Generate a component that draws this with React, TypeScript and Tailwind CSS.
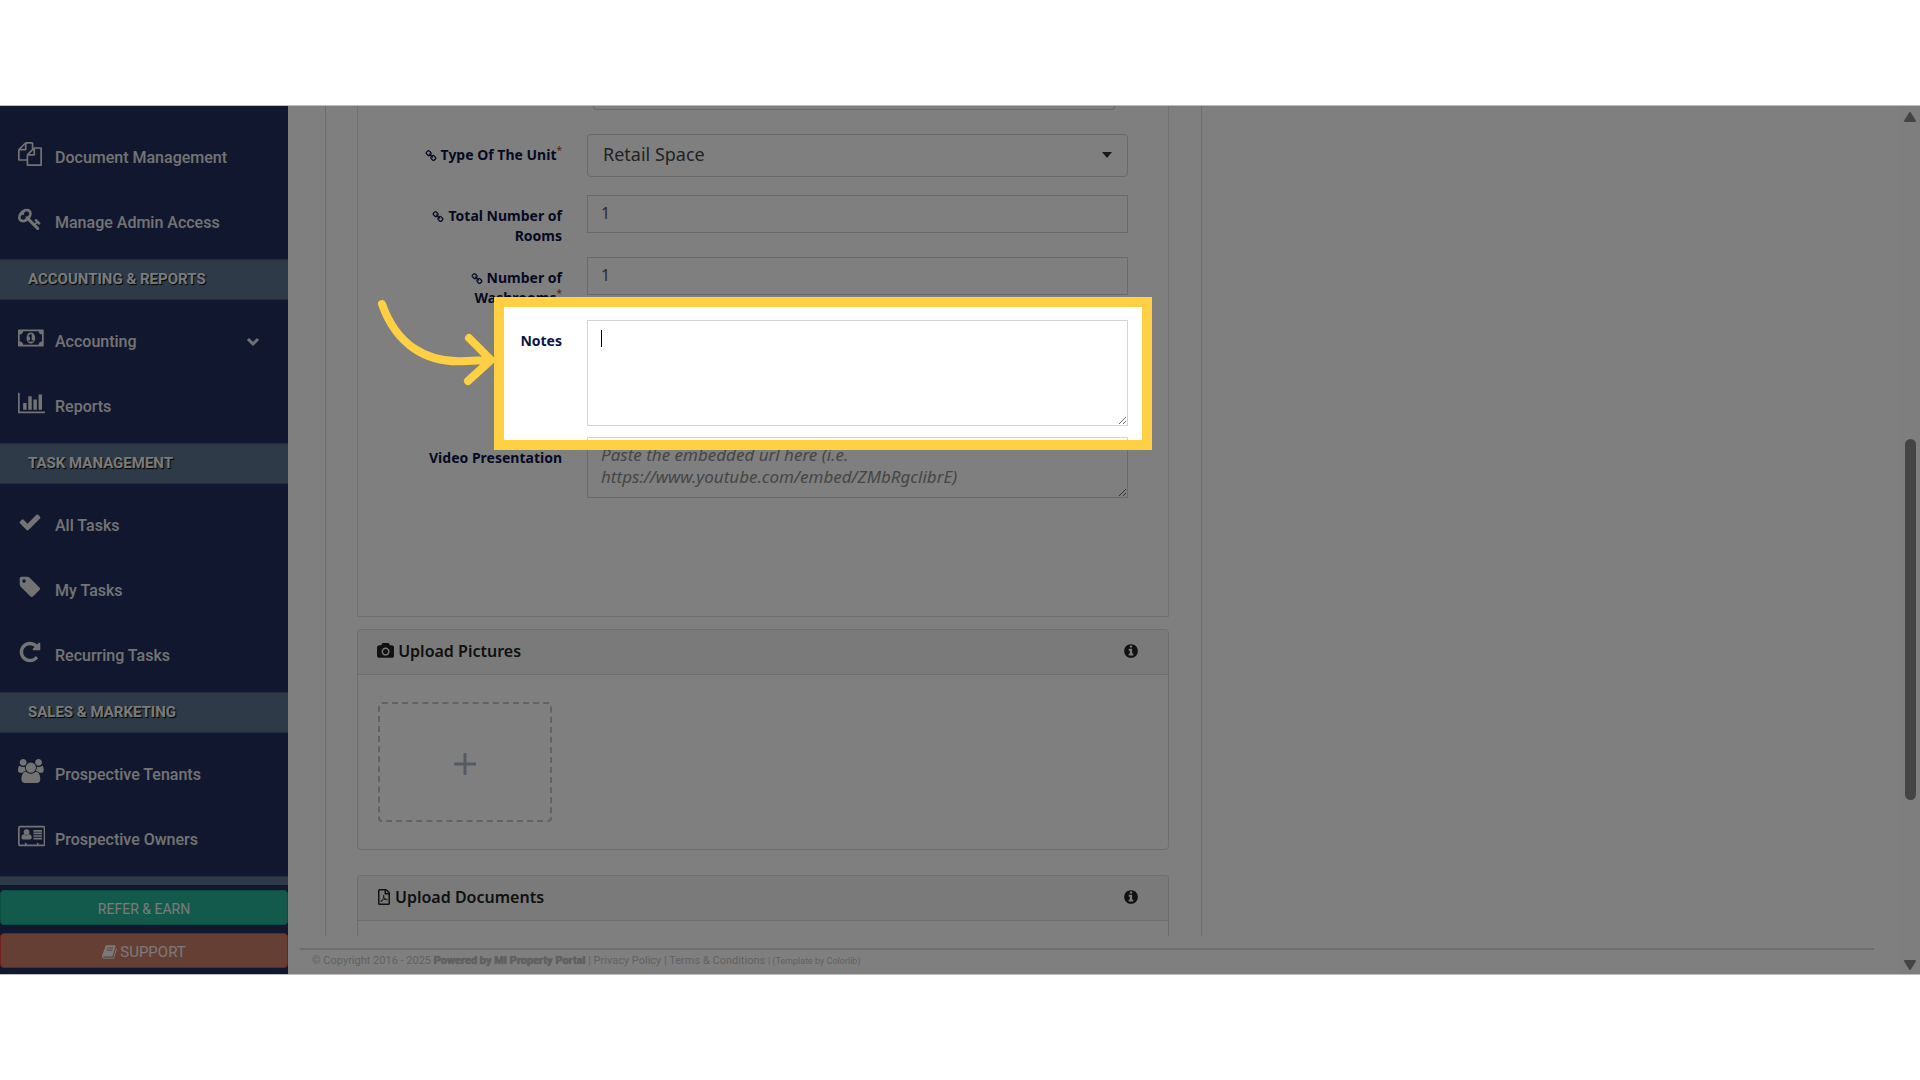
import React from 'react'
import { FaRegFilePdf } from 'react-icons/fa'

interface iconProps {
  name: string
  className?: string
}

interface glyph {
  width: number
  d: string
}

// every glyph sits on a 1792 high grid
const glyphs: Record<string, glyph> = {
  files: { width: 1792, d: 'M1696 384q40 0 68 28t28 68v1216q0 40-28 68t-68 28h-960q-40 0-68-28t-28-68v-288h-544q-40 0-68-28t-28-68v-672q0-40 20-88t48-76l408-408q28-28 76-48t88-20h416q40 0 68 28t28 68v328q68-40 128-40h416zm-544 213l-299 299h299v-299zm-640-384l-299 299h299v-299zm196 647l316-316v-416h-384v416q0 40-28 68t-68 28h-416v640h512v-256q0-40 20-88t48-76zm956 804v-1152h-384v416q0 40-28 68t-68 28h-416v640h896z' },
  key: { width: 1792, d: 'M832 512q0-80-56-136t-136-56-136 56-56 136q0 42 19 83-41-19-83-19-80 0-136 56t-56 136 56 136 136 56 136-56 56-136q0-42-19-83 41 19 83 19 80 0 136-56t56-136zm851 704q0 17-49 66t-66 49q-9 0-28.5-16t-36.5-33-38.5-40-24.5-26l-96 96 220 220q28 28 28 68 0 42-39 81t-81 39q-40 0-68-28l-671-671q-176 131-365 131-163 0-265.5-102.5t-102.5-265.5q0-160 95-313t248-248 313-95q163 0 265.5 102.5t102.5 265.5q0 189-131 365l355 355 96-96q-3-3-26-24.5t-40-38.5-33-36.5-16-28.5q0-17 49-66t66-49q13 0 23 10 6 6 46 44.5t82 79.5 86.5 86 73 78 28.5 41z' },
  money: { width: 1920, d: 'M768 1152h384v-96h-128v-448h-114l-148 137 77 80q42-37 55-57h2v288h-128v96zm512-256q0 70-21 142t-59.5 134-101.5 101-138 39-138-39-101.5-101-59.5-134-21-142 21-142 59.5-134 101.5-101 138-39 138 39 101.5 101 59.5 134 21 142zm512 256v-512q-106 0-181-75t-75-181h-1152q0 106-75 181t-181 75v512q106 0 181 75t75 181h1152q0-106 75-181t181-75zm128-832v1152q0 26-19 45t-45 19h-1792q-26 0-45-19t-19-45v-1152q0-26 19-45t45-19h1792q26 0 45 19t19 45z' },
  chart: { width: 2048, d: 'M640 896v512h-256v-512h256zm384-512v1024h-256v-1024h256zm1024 1152v128h-2048v-1536h128v1408h1920zm-640-896v768h-256v-768h256zm384-384v1152h-256v-1152h256z' },
  check: { width: 1792, d: 'M1671 566q0 40-28 68l-724 724-136 136q-28 28-68 28t-68-28l-136-136-362-362q-28-28-28-68t28-68l136-136q28-28 68-28t68 28l294 295 656-657q28-28 68-28t68 28l136 136q28 28 28 68z' },
  tag: { width: 1792, d: 'M448 448m128 0q0-53-37.5-90.5t-90.5-37.5-90.5 37.5-37.5 90.5 37.5 90.5 90.5 37.5 90.5-37.5 37.5-90.5zm1067 576q0 53-37 90l-491 492q-39 37-91 37-53 0-90-37l-715-716q-38-37-64.5-101t-26.5-117v-416q0-52 38-90t90-38h416q53 0 117 26.5t102 64.5l715 714q37 39 37 91z' },
  repeat: { width: 1792, d: 'M1664 256v448q0 26-19 45t-45 19h-448q-42 0-59-40-17-39 14-69l138-138q-148-137-349-137-104 0-198.5 40.5t-163.5 109.5-109.5 163.5-40.5 198.5 40.5 198.5 109.5 163.5 163.5 109.5 198.5 40.5q119 0 225-52t179-147q7-10 23-12 15 0 25 9l137 138q9 8 9.5 20.5t-7.5 22.5q-109 132-264 204.5t-327 72.5q-156 0-298-61t-245-164-164-245-61-298 61-298 164-245 245-164 298-61q147 0 284.5 55.5t244.5 156.5l130-129q29-31 70-14 39 17 39 59z' },
  users: { width: 1920, d: 'M593 896q-162 5-265 128h-134q-82 0-138-40.5t-56-118.5q0-353 124-353 6 0 43.5 21t97.5 42.5 119 21.5q67 0 133-23-5 37-5 66 0 139 81 256zm1071 637q0 120-73 189.5t-194 69.5h-874q-121 0-194-69.5t-73-189.5q0-53 3.5-103.5t14-109 26.5-108.5 43-97.5 62-81 85.5-53.5 111.5-20q10 0 43 21.5t73 48 107 48 135 21.5 135-21.5 107-48 73-48 43-21.5q61 0 111.5 20t85.5 53.5 62 81 43 97.5 26.5 108.5 14 109 3.5 103.5zm-1024-1277q0 106-75 181t-181 75-181-75-75-181 75-181 181-75 181 75 75 181zm704 384q0 159-112.5 271.5t-271.5 112.5-271.5-112.5-112.5-271.5 112.5-271.5 271.5-112.5 271.5 112.5 112.5 271.5zm576 225q0 78-56 118.5t-138 40.5h-134q-103-123-265-128 81-117 81-256 0-29-5-66 66 23 133 23 59 0 119-21.5t97.5-42.5 43.5-21q124 0 124 353zm-128-609q0 106-75 181t-181 75-181-75-75-181 75-181 181-75 181 75 75 181z' },
  card: { width: 2048, d: 'M160 128h1728q66 0 113 47t47 113v1216q0 66-47 113t-113 47h-1728q-66 0-113-47t-47-113v-1216q0-66 47-113t113-47zm0 128q-32 0-32 32v1216q0 32 32 32h352v-96q0-32 32-32h64q32 0 32 32v96h768v-96q0-32 32-32h64q32 0 32 32v96h352q32 0 32-32v-1216q0-32-32-32zM640 384a215 215 0 1 1 0 430a215 215 0 1 1 0-430zM460 765q80 85 180 85t180-85q204 10 204 260 0 127-128 127h-512q-128 0-128-127 0-250 204-260zM1152 448h640v128h-640zM1152 640h640v128h-640zM1152 832h640v128h-640zM1152 1024h640v128h-640z' },
  book: { width: 1792, d: 'M1639 478q40 57 18 129l-275 906q-19 64-76.5 107.5t-122.5 43.5h-923q-77 0-148.5-53.5t-99.5-131.5q-24-67-2-127 0-4 3-27t4-37q1-8-3-21.5t-3-19.5q2-11 8-21t16.5-23.5 16.5-23.5q23-38 45-91.5t30-91.5q3-10 .5-30t-.5-28q3-11 17-28t17-23q21-36 42-92t25-90q1-9-2.5-32t.5-28q4-13 22-30.5t22-22.5q19-26 42.5-84.5t27.5-96.5q1-8-3-25.5t-2-26.5q2-8 9-18t18-23 17-21q8-12 16.5-30.5t15-35 16-36 19.5-32 26.5-23.5 36-11.5 47.5 5.5l-1 3q38-9 51-9h761q74 0 114 56t18 130l-274 906q-36 119-71.5 153.5t-128.5 34.5h-869q-27 0-38 15-11 16-1 43 24 70 144 70h923q29 0 56-15.5t35-41.5l300-987q7-22 5-57 38 15 59 43zm-1064 2q-4 13 2 22.5t20 9.5h608q13 0 25.5-9.5t16.5-22.5l21-64q4-13-2-22.5t-20-9.5h-608q-13 0-25.5 9.5t-16.5 22.5zm-83 256q-4 13 2 22.5t20 9.5h608q13 0 25.5-9.5t16.5-22.5l21-64q4-13-2-22.5t-20-9.5h-608q-13 0-25.5 9.5t-16.5 22.5z' },
  link: { width: 1792, d: 'M1520 1216q0-40-28-68l-208-208q-28-28-68-28-42 0-72 32 3 3 19 18.5t21.5 21.5 15 19 13 25.5 3.5 27.5q0 40-28 68t-68 28q-15 0-27.5-3.5t-25.5-13-19-15-21.5-21.5-18.5-19q-33 31-33 73 0 40 28 68l206 207q27 27 68 27 40 0 68-26l147-146q28-28 28-67zm-703-705q0-40-28-68l-206-207q-28-28-68-28-39 0-68 27l-147 146q-28 28-28 67 0 40 28 68l208 208q27 27 68 27 42 0 72-31-3-3-19-18.5t-21.5-21.5-15-19-13-25.5-3.5-27.5q0-40 28-68t68-28q15 0 27.5 3.5t25.5 13 19 15 21.5 21.5 18.5 19q33-31 33-73zm895 705q0 120-85 203l-147 146q-83 83-203 83-121 0-204-85l-206-207q-83-83-83-203 0-123 88-209l-88-88q-86 88-208 88-120 0-204-84l-208-208q-84-84-84-204t85-203l147-146q83-83 203-83 121 0 204 85l206 207q83 83 83 203 0 123-88 209l88 88q86-88 208-88 120 0 204 84l208 208q84 84 84 204z' },
  camera: { width: 1920, d: 'M960 672q119 0 203.5 84.5t84.5 203.5-84.5 203.5-203.5 84.5-203.5-84.5-84.5-203.5 84.5-203.5 203.5-84.5zm704-416q106 0 181 75t75 181v896q0 106-75 181t-181 75h-1408q-106 0-181-75t-75-181v-896q0-106 75-181t181-75h224l51-136q19-49 69.5-84.5t103.5-35.5h512q53 0 103.5 35.5t69.5 84.5l51 136h224zm-704 1152q185 0 316.5-131.5t131.5-316.5-131.5-316.5-316.5-131.5-316.5 131.5-131.5 316.5 131.5 316.5 316.5 131.5z' },
  info: { width: 1792, d: 'M1152 1376v-160q0-14-9-23t-23-9h-96v-512q0-14-9-23t-23-9h-320q-14 0-23 9t-9 23v160q0 14 9 23t23 9h96v320h-96q-14 0-23 9t-9 23v160q0 14 9 23t23 9h448q14 0 23-9t9-23zm-128-896v-160q0-14-9-23t-23-9h-192q-14 0-23 9t-9 23v160q0 14 9 23t23 9h192q14 0 23-9t9-23zm640 416q0 209-103 385.5t-279.5 279.5-385.5 103-385.5-103-279.5-279.5-103-385.5 103-385.5 279.5-279.5 385.5-103 385.5 103 279.5 279.5 103 385.5z' },
}

const Icon: React.FC<iconProps> = ({ name, className }) => (
  <svg viewBox={`0 0 ${glyphs[name].width} 1792`} fill="currentColor" fillRule="evenodd" aria-hidden="true" className={className}>
    <path d={glyphs[name].d} />
  </svg>
)

interface menuItem {
  label: string
  icon: string
  open?: boolean
}

interface menuGroup {
  title?: string
  items: menuItem[]
}

const menu: menuGroup[] = [
  { items: [{ label: 'Document Management', icon: 'files' }, { label: 'Manage Admin Access', icon: 'key' }] },
  { title: 'ACCOUNTING & REPORTS', items: [{ label: 'Accounting', icon: 'money', open: true }, { label: 'Reports', icon: 'chart' }] },
  { title: 'TASK MANAGEMENT', items: [{ label: 'All Tasks', icon: 'check' }, { label: 'My Tasks', icon: 'tag' }, { label: 'Recurring Tasks', icon: 'repeat' }] },
  { title: 'SALES & MARKETING', items: [{ label: 'Prospective Tenants', icon: 'users' }, { label: 'Prospective Owners', icon: 'card' }] },
]

const Sidebar: React.FC = () => (
  <aside className="w-72 shrink-0 flex flex-col bg-[#202e5e] font-[Roboto,sans-serif]">
    <nav className="flex-1 min-h-0 overflow-hidden pt-[10px]">
      {menu.map((group, i) => (
        <div key={i}>
          {group.title && (
            <h3 className="h-[41px] flex items-center pl-7 pb-px bg-[#5c748e] border-y border-[#43597a] text-[15px] font-bold text-gray-100 [text-shadow:1px_1px_1px_#000]">{group.title}</h3>
          )}
          <div className="pt-[9px] pb-1">
            {group.items.map(item => (
              <a key={item.label} href="#" className="h-[65px] flex items-center pl-[18px] pr-7 text-base font-medium text-[#e7e7e7]">
                <span className="w-[37px] pb-[7px]">
                  <Icon name={item.icon} className="h-6" />
                </span>
                <span>{item.label}</span>
                {item.open && (
                  <svg viewBox="0 0 14 10" fill="none" stroke="currentColor" strokeWidth="3" className="w-[14px] ml-auto">
                    <path d="M2 2l5 5l5-5" />
                  </svg>
                )}
              </a>
            ))}
          </div>
        </div>
      ))}
      <div className="h-[41px] bg-[#5c748e] border-y border-[#43597a]"></div>
    </nav>
    <div className="flex flex-col gap-2 pt-[5px] pb-[6px]">
      <button className="h-[35px] pt-[3px] rounded-sm border border-[#169f85] bg-[#28b498] text-sm text-gray-100">REFER &amp; EARN</button>
      <button className="h-[35px] pt-[3px] rounded-sm border border-[#f03c3c] bg-[#ca7e68] text-[15px] text-gray-100 flex items-center justify-center gap-[2px]">
        <Icon name="book" className="h-4" />
        SUPPORT
      </button>
    </div>
  </aside>
)

interface fieldProps {
  id: string
  label: string
  linked?: boolean
  required?: boolean
  className: string
  children: React.ReactNode
}

const Field: React.FC<fieldProps> = ({ id, label, linked, required, className, children }) => (
  <div className={`relative flex gap-[25px] pr-10 ${className}`}>
    <label htmlFor={id} className="w-[204px] shrink-0 pl-[54px] pt-[11px] text-right text-sm leading-5 font-bold text-[#0c1544]">
      {linked && <Icon name="link" className="inline h-3 mr-1" />}
      {label}
      {required && <span className="align-text-top text-[10px] leading-[10px] font-normal text-[#c0392b]">*</span>}
    </label>
    {children}
  </div>
)

const inputStyle = 'flex-1 min-w-0 self-start border border-[#d4d4d4] bg-white px-[13px] text-[#555]'

interface panelProps {
  title: string
  icon: React.ReactNode
  className: string
  children?: React.ReactNode
}

const Panel: React.FC<panelProps> = ({ title, icon, className, children }) => (
  <section className={`border-[#dcdcdc] ${className}`}>
    <div className="h-[45px] flex items-center gap-1 pl-[19px] pr-[29px] pb-[2px] bg-[#f5f5f5] border-b border-[#dcdcdc] rounded-t text-[#222]">
      {icon}
      <h4 className="text-base font-semibold">{title}</h4>
      <button type="button" aria-label={`About ${title}`} className="ml-auto">
        <Icon name="info" className="h-4" />
      </button>
    </div>
    {children}
  </section>
)

const UnitForm: React.FC = () => (
  <form className="border-x border-[#dcdcdc] ml-[37px] w-[877px] max-w-full pl-[31px] pr-8">
    <div className="border border-t-0 border-[#e4e4e4] pb-[118px]">
      <div className="h-1 ml-[235px] mr-[53px] border border-t-0 border-[#d4d4d4] rounded-b"></div>
      <Field id="type" label="Type Of The Unit" linked required className="mt-6">
        <div className="relative flex-1 min-w-0 h-[43px]">
          <select id="type" className="w-full h-full appearance-none border border-[#d4d4d4] rounded bg-white px-[15px] pb-1 text-lg text-[#444]">
            <option>Retail Space</option>
          </select>
          <svg viewBox="0 0 10 6" className="absolute right-4 top-[18px] w-[10px]" fill="#333">
            <path d="M0 0h10l-5 6z" />
          </svg>
        </div>
      </Field>
      <Field id="rooms" label="Total Number of Rooms" linked className="mt-[18px]">
        <input id="rooms" defaultValue="1" className={`${inputStyle} h-[38px] pb-[2px] text-base`} />
      </Field>
      <Field id="washrooms" label="Number of Washrooms" linked required className="mt-[11px]">
        <input id="washrooms" defaultValue="1" className={`${inputStyle} h-[38px] pb-[2px] text-base`} />
      </Field>
      <Field id="notes" label="Notes" className="mt-3">
        <textarea id="notes" className={`${inputStyle} h-[106px] text-base`}></textarea>
        <span className="absolute left-[243px] top-[10px] w-px h-[17px] bg-black"></span>
        {/* spotlight, dims everything around it */}
        <div className="absolute z-20 left-[136px] right-4 -top-[23px] -bottom-6 border-[10px] border-[#ffd043] shadow-[0_0_0_4000px_rgba(0,0,0,0.5)] pointer-events-none"></div>
        <svg viewBox="0 0 126 96" fill="none" stroke="#ffd043" strokeWidth="8" strokeLinecap="round" strokeLinejoin="round" className="absolute z-30 left-4 -top-6 w-[126px] h-24 pointer-events-none">
          <path d="M8 8C22 48 52 68 92 65L116 64M95 42L117 64L94 85" />
        </svg>
      </Field>
      <Field id="video" label="Video Presentation" className="mt-[11px]">
        <textarea id="video" placeholder="Paste the embedded url here (i.e. https://www.youtube.com/embed/ZMbRgclibrE)" className={`${inputStyle} h-[61px] pt-[6px] pr-[150px] text-[17px] leading-[22px] overflow-hidden placeholder:italic placeholder:text-[#8c8c8c]`}></textarea>
      </Field>
    </div>
    <Panel title="Upload Pictures" icon={<Icon name="camera" className="h-4" />} className="mt-3 border rounded">
      <div className="pt-[27px] pb-[27px] pl-5">
        <button type="button" aria-label="Add picture" className="w-[174px] h-[120px] pt-1 flex items-center justify-center border-2 border-dashed border-[#bcc6d2] rounded">
          <svg viewBox="0 0 22 22" stroke="#a9b6c6" strokeWidth="3" className="w-[22px]">
            <path d="M11 0v22M0 11h22" />
          </svg>
        </button>
      </div>
    </Panel>
    <Panel title="Upload Documents" icon={<FaRegFilePdf className="h-4 w-[14px]" />} className="mt-[25px] h-[61px] border border-b-0 rounded-t" />
  </form>
)

const Scrollbar: React.FC = () => (
  <div className="w-5 shrink-0 flex flex-col items-center pt-1.5 pb-1 bg-[#fcfcfc] text-[#888]">
    <svg viewBox="0 0 12 10" fill="currentColor" stroke="currentColor" strokeLinejoin="round" strokeWidth="2" className="w-3 h-[10px]">
      <path d="M6 1l5 8h-10z" />
    </svg>
    <div className="flex-[317]"></div>
    <div className="flex-[361] w-[11px] rounded-full bg-[#888]"></div>
    <div className="flex-[160]"></div>
    <svg viewBox="0 0 12 10" fill="currentColor" stroke="currentColor" strokeLinejoin="round" strokeWidth="2" className="w-3 h-[10px]">
      <path d="M6 9l5-8h-10z" />
    </svg>
  </div>
)

const App: React.FC = () => {
  return (
    <div className="h-screen flex flex-col py-[105px] bg-white font-['Noto_Sans',sans-serif]">
      <div className="relative flex-1 min-h-0 flex overflow-hidden border-y border-[#bcbcbc]">
        <Sidebar />
        <main className="flex-1 min-w-0 flex flex-col">
          <div className="flex-1 min-h-0">
            <UnitForm />
          </div>
          <footer className="ml-3 mr-[26px] h-[26px] border-t-2 border-[#dcdcdc] pl-3 font-[Roboto,sans-serif] text-[11px] leading-[22px] text-[#c4c4c4]">
            © Copyright 2016 - 2025 <a href="#" className="font-bold [text-shadow:0_0_1px_#999]">Powered by MI Property Portal</a> | <a href="#">Privacy Policy</a> | <a href="#">Terms &amp; Conditions</a> <small className="text-[9px]">| (Template by <a href="#">Colorlib</a>)</small>
          </footer>
        </main>
        <Scrollbar />
      </div>
    </div>
  )
}

export default App
